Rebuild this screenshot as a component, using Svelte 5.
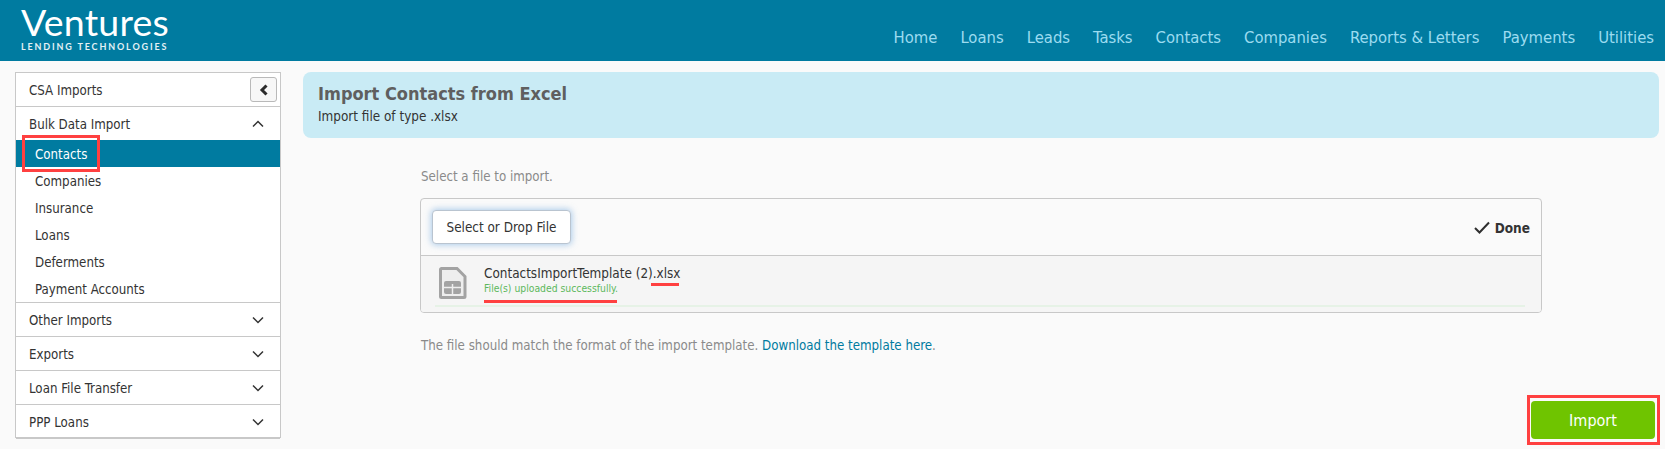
<script>
  const nav = ['Home','Loans','Leads','Tasks','Contacts','Companies','Reports & Letters','Payments','Utilities'];
  const subs = ['Contacts','Companies','Insurance','Loans','Deferments','Payment Accounts'];
  const closed = ['Other Imports','Exports','Loan File Transfer','PPP Loans'];
</script>

<div class="page">
  <header class="top">
    <div class="logo">
      <div class="logo-name">Ventures</div>
      <div class="logo-sub">LENDING TECHNOLOGIES</div>
    </div>
    <nav class="nav">
      {#each nav as n}<a href="#top">{n}</a>{/each}
    </nav>
  </header>

  <div class="body">
    <aside class="side">
      <div class="row">
        <span>CSA Imports</span>
        <button class="collapse" aria-label="Collapse">
          <svg width="10" height="12" viewBox="0 0 10 12"><path d="M7.500 1.500 3 6l4.500 4.500" fill="none" stroke="#2b2b2b" stroke-width="3"/></svg>
        </button>
      </div>
      <div class="row open">
        <span>Bulk Data Import</span>
        <svg class="chev" width="12" height="8" viewBox="0 0 12 8"><path d="M1 6.500 6 1.500l5 5" fill="none" stroke="#333" stroke-width="1.500"/></svg>
      </div>
      <ul class="subs">
        {#each subs as s, i}<li class:active={i === 0}>{s}</li>{/each}
      </ul>
      {#each closed as c}
        <div class="row closed">
          <span>{c}</span>
          <svg class="chev" width="12" height="8" viewBox="0 0 12 8"><path d="M1 1.500l5 5 5-5" fill="none" stroke="#333" stroke-width="1.500"/></svg>
        </div>
      {/each}
      <div class="mark mark-contacts"></div>
    </aside>

    <main class="main">
      <section class="banner">
        <h1>Import Contacts from Excel</h1>
        <p>Import file of type .xlsx</p>
      </section>

      <div class="content">
        <p class="hint">Select a file to import.</p>
        <div class="upload">
          <div class="toolbar">
            <button class="select">Select or Drop File</button>
            <div class="done">
              <svg width="16" height="13" viewBox="0 0 16 13"><path d="M1 7l4.500 4.500L15 1.500" fill="none" stroke="#2f2f2f" stroke-width="2"/></svg>
              <span>Done</span>
            </div>
          </div>
          <div class="file">
            <svg class="file-icon" width="28" height="32" viewBox="0 0 28 32">
              <path d="M2.500 1.500H18l8 8v20a1 1 0 0 1-1 1H2.500a1 1 0 0 1-1-1V2.500a1 1 0 0 1 1-1Z" fill="#eeeeee" stroke="#a3a3a3" stroke-width="3"/>
              <rect x="5" y="14" width="17" height="13" rx="2" fill="#a3a3a3"/>
              <path d="M13.500 17v10M5 20.500h17" stroke="#eeeeee" stroke-width="1.500"/>
            </svg>
            <div class="file-text">
              <div class="file-name">ContactsImportTemplate (2).xlsx<span class="mark-xlsx"></span></div>
              <div class="file-status">File(s) uploaded successfully.<span class="mark-status"></span></div>
            </div>
            <div class="progress"></div>
          </div>
        </div>
        <p class="note">The file should match the format of the import template. <a href="#top">Download the template here</a>.</p>
      </div>

      <div class="actions">
        <div class="import-mark"><button class="import">Import</button></div>
      </div>
    </main>
  </div>
</div>

<style>
  :global(body) { margin: 0; background: #fafafa; }
  .page {
    font-family: "DejaVu Sans", "Liberation Sans", sans-serif;
    font-stretch: condensed;
    font-size: 13.200px;
    color: #333;
    height: 449px;
    overflow: hidden;
  }
  .top {
    height: 61px;
    background: #007ba0;
    display: flex;
    justify-content: space-between;
    box-sizing: border-box;
    padding: 0 11px 0 21px;
  }
  .logo { color: #fff; font-family: Lato, sans-serif; font-stretch: normal; padding-top: 3px; }
  .logo-name { font-size: 37.500px; line-height: 38px; letter-spacing: 0.200px; font-weight: 400; margin-bottom: 1px; }
  .logo-sub { font-size: 9px; line-height: 10px; font-weight: 700; letter-spacing: 1.850px; color: #e3f1f5; }
  .nav { display: flex; gap: 23px; align-items: center; padding-top: 14px; font-size: 16.500px; }
  .nav a { color: #9cdcf0; text-decoration: none; white-space: nowrap; }

  .body { display: flex; gap: 22px; padding: 11px 6px 0 15px; }
  .side {
    position: relative;
    width: 266px;
    height: 366px;
    box-sizing: border-box;
    flex: none;
    background: #fff;
    border: 1px solid #c8c8c8;
  }
  .row {
    height: 33px;
    display: flex;
    align-items: center;
    justify-content: space-between;
    box-sizing: border-box;
    padding: 0 16px 0 13px;
    border-bottom: 1px solid #c8c8c8;
  }
  .row span { padding-top: 2px; }
  .row:first-child { height: 34px; padding-right: 3px; }
  .row.open { border-bottom: none; height: 33px; }
  .row.closed { height: 34px; }
  .row.closed:last-of-type { border-bottom: none; }
  .collapse {
    width: 27px;
    height: 25px;
    padding: 0;
    display: flex;
    align-items: center;
    justify-content: center;
    border: 1px solid #b9b9b9;
    border-radius: 3px;
    background: #f7f7f7;
  }
  .subs { list-style: none; margin: 0; padding: 0; border-bottom: 1px solid #c8c8c8; }
  .subs li { height: 27px; line-height: 29px; padding-left: 19px; }
  .subs li.active { background: #007ba0; color: #fff; }
  .mark { position: absolute; border: 3px solid #ff4040; box-sizing: border-box; }
  .mark-contacts { left: 6px; top: 62px; width: 78px; height: 37px; }

  .main { flex: 1; min-width: 0; }
  .banner {
    height: 66px;
    box-sizing: border-box;
    background: #c9ebf5;
    border-radius: 8px;
    padding: 10px 15px;
  }
  .banner h1 { margin: 0; font-size: 18px; line-height: 23px; font-weight: 700; color: #5f5f5f; }
  .banner p { margin: 0; font-size: 13.400px; line-height: 24px; }
  .content { margin: 0 0 0 117px; }
  .hint { margin: 0; padding: 30px 0 0 1px; line-height: 18px; color: #8a8a8a; }
  .upload {
    margin-top: 12px;
    width: 1122px;
    box-sizing: border-box;
    height: 115px;
    border: 1px solid #c8c8c8;
    border-radius: 4px;
    overflow: hidden;
    background: #fafafa;
  }
  .toolbar {
    height: 57px;
    box-sizing: border-box;
    border-bottom: 1px solid #c8c8c8;
    display: flex;
    align-items: center;
    justify-content: space-between;
    padding: 1px 11px 0;
  }
  .select {
    width: 139px;
    height: 34px;
    font: inherit;
    font-stretch: condensed;
    font-size: 13.400px;
    color: #333;
    background: #fff;
    border: 1px solid #b9c4d0;
    border-radius: 4px;
    box-shadow: 0 0 6px 1px rgba(110, 165, 220, 0.55);
    padding: 0;
    margin-top: -1px;
  }
  .done { display: flex; align-items: center; gap: 5px; font-weight: 700; color: #333; font-size: 13.500px; }
  .file { position: relative; height: 56px; background: #f5f5f5; }
  .file-icon { position: absolute; left: 18px; top: 11px; }
  .file-text { position: absolute; left: 63px; top: 9px; }
  .file-name { position: relative; font-size: 13.400px; line-height: 17px; color: #333; white-space: nowrap; }
  .file-status { position: relative; font-size: 10.300px; line-height: 13px; color: #5cb85c; white-space: nowrap; }
  .mark-xlsx { position: absolute; left: 167px; bottom: -4px; width: 28px; height: 3px; background: #ff4040; }
  .mark-status { position: absolute; left: 0; top: 18px; width: 133px; height: 3px; background: #ff4040; }
  .progress { position: absolute; left: 14px; right: 16px; top: 49px; height: 2px; background: #e6f2e6; }
  .note { margin: 0; padding: 24px 0 0 1px; line-height: 18px; color: #8a8a8a; }
  .note a { color: #007ba0; text-decoration: none; }
  .actions { display: flex; justify-content: flex-end; margin-top: 40px; margin-right: -1px; }
  .import-mark { border: 3px solid #ff4040; padding: 3px 2px 3px 1px; }
  .import {
    display: block;
    width: 124px;
    height: 38px;
    border: none;
    border-radius: 4px;
    background: #6fc400;
    color: #fff;
    font: inherit;
    font-stretch: condensed;
    font-size: 16px;
    padding: 0;
  }
</style>
